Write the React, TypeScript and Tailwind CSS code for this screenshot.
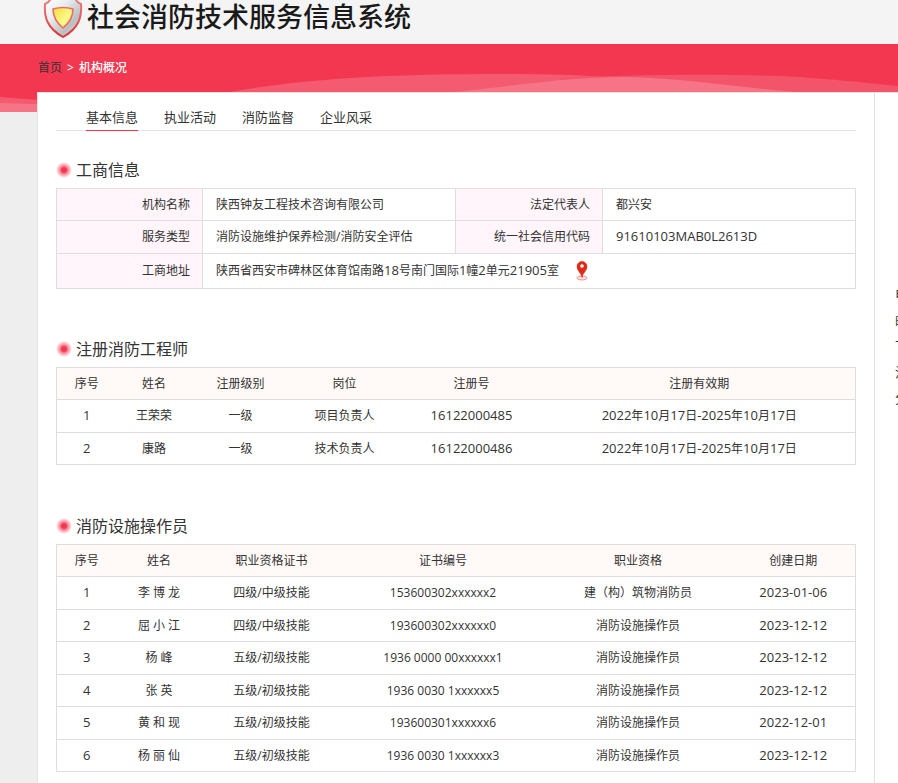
const CJK = "font-['Open_Sans','Noto_Sans_CJK_SC',sans-serif]"

const tabs = ['基本信息', '执业活动', '消防监督', '企业风采']

const engineers = [
  ['1', '王荣荣', '一级', '项目负责人', '16122000485', '2022年10月17日-2025年10月17日'],
  ['2', '康路', '一级', '技术负责人', '16122000486', '2022年10月17日-2025年10月17日'],
]

const operators = [
  ['1', '李 博 龙', '四级/中级技能', '153600302xxxxxx2', '建（构）筑物消防员', '2023-01-06'],
  ['2', '屈 小 江', '四级/中级技能', '193600302xxxxxx0', '消防设施操作员', '2023-12-12'],
  ['3', '杨 峰', '五级/初级技能', '1936 0000 00xxxxxx1', '消防设施操作员', '2023-12-12'],
  ['4', '张 英', '五级/初级技能', '1936 0030 1xxxxxx5', '消防设施操作员', '2023-12-12'],
  ['5', '黄 和 现', '五级/初级技能', '193600301xxxxxx6', '消防设施操作员', '2022-12-01'],
  ['6', '杨 丽 仙', '五级/初级技能', '1936 0030 1xxxxxx3', '消防设施操作员', '2023-12-12'],
]

function Shield() {
  return (
    <svg viewBox="0 0 40 40" className="h-10 w-10 shrink-0" aria-hidden="true">
      <defs>
        <linearGradient id="steel" x1="0" y1="0" x2="1" y2="1">
          <stop offset="0" stopColor="#ffffff" />
          <stop offset="0.35" stopColor="#e9eef0" />
          <stop offset="0.7" stopColor="#b9bec1" />
          <stop offset="1" stopColor="#f3f3f3" />
        </linearGradient>
        <linearGradient id="edge" x1="0" y1="0" x2="0" y2="1">
          <stop offset="0" stopColor="#f07f80" />
          <stop offset="1" stopColor="#dd3436" />
        </linearGradient>
        <linearGradient id="gold" x1="0" y1="0" x2="1" y2="1">
          <stop offset="0" stopColor="#f5dc3c" />
          <stop offset="0.6" stopColor="#fdf98c" />
          <stop offset="1" stopColor="#f3e04a" />
        </linearGradient>
      </defs>
      <path d="M8 -2 C7 1 5 3 2 4 C1 17 4 28 20 37 C36 28 39 17 38 4 C35 3 33 1 32 -2 Z" fill="url(#steel)" stroke="url(#edge)" strokeWidth="2" />
      <path d="M10 9 Q20 6 30 9 Q30 20 20 28 Q10 20 10 9 Z" fill="url(#gold)" stroke="#ee6a62" strokeWidth="1.6" />
    </svg>
  )
}

function Waves() {
  return (
    <svg viewBox="0 0 898 68" preserveAspectRatio="none" className="absolute inset-0 h-full w-full" aria-hidden="true">
      <path d="M230 48 C330 30 440 30 520 30 C600 31 640 34 700 48 Z" fill="#f45b70" />
      <path d="M560 34 C650 30 740 30 800 33 C840 36 870 39 898 42 V50 H560 Z" fill="#f4546a" />
      <path d="M455 48 C530 40 570 33 625 33 C680 34 730 42 795 48 Z" fill="#f67486" />
      <path d="M0 53 Q20 55 60 57 V68 H0 Z" fill="#f45b70" />
      <path d="M0 59 L60 61 V68 H0 Z" fill="#f67486" />
    </svg>
  )
}

function Pin() {
  return (
    <svg viewBox="0 0 14 20" className="h-5 w-3.5" aria-hidden="true">
      <ellipse cx="7" cy="17" rx="5.2" ry="2" fill="#fbe3df" stroke="#f0958a" />
      <path d="M7 16.500 C6.500 12 2 10 2 5.500 A5 5 0 0 1 12 5.500 C12 10 7.500 12 7 16.500 Z" fill="#dc2a17" stroke="#dc2a17" strokeWidth="0.6" />
      <circle cx="7" cy="5" r="1.800" fill="#fff" />
    </svg>
  )
}

// Latin runs are set one size larger than the Chinese around them
function Mixed({ text }: { text: string }) {
  return text.split(/([\dA-Z\-]+)/).map((part, i) =>
    i % 2 ? <span key={i} className="text-[13px] leading-3">{part}</span> : part
  )
}

function SectionTitle({ children }: { children: string }) {
  return (
    <h2 className="flex h-9 items-center gap-1 text-base text-[#333]">
      <span className="h-4 w-4 rounded-full bg-[radial-gradient(circle,#f23751_0_20%,#f78b9a_36%,#fbc3cb_54%,#fff_72%)]" />
      {children}
    </h2>
  )
}

function DataTable({ heads, widths, rows }: { heads: string[]; widths: string[]; rows: string[][] }) {
  return (
    <table className="w-full table-fixed border-collapse border border-[#dedede] text-center">
      <thead>
        <tr className="h-8 border-b border-[#dedede] bg-[#fff9f7]">
          {heads.map((head, i) => (
            <th key={head} className={`font-normal ${widths[i]}`}>{head}</th>
          ))}
        </tr>
      </thead>
      <tbody>
        {rows.map(row => (
          <tr key={row[0]} className="border-b border-[#dedede] odd:h-[33px] even:h-8">
            {row.map((cell, i) => (
              <td key={i} className="whitespace-nowrap">
                {cell.includes('x') ? cell : <Mixed text={cell} />}
              </td>
            ))}
          </tr>
        ))}
      </tbody>
    </table>
  )
}

const labelCell = 'border border-[#dedede] bg-[#fff5fb] pr-3 text-right font-normal'
const valueCell = 'border border-[#dedede] pl-[13px]'

export default function App() {
  return (
    <div className={`min-h-screen overflow-hidden bg-[#eee] text-xs leading-4 text-[#333] ${CJK}`}>
      <header className="flex h-11 items-start gap-1 bg-[#f4f4f4] pl-[43px]">
        <Shield />
        <h1 className="text-[27px] leading-[34px] font-medium whitespace-nowrap text-[#1a1a1a]">社会消防技术服务信息系统</h1>
      </header>

      <div className="relative h-[68px] bg-[#f33750]">
        <Waves />
        <nav className="relative flex gap-[5px] pt-4 pl-[38px] text-white">
          <a href="#" className="text-[#333]">首页</a>
          <span>&gt;</span>
          <span className="font-medium">机构概况</span>
        </nav>
      </div>

      <div className="relative -mt-5 ml-[37px] flex border-t border-l border-[#e3e3e3] bg-white">
        <main className="min-w-0 flex-1 px-[18px] pb-3">
          <nav className="flex gap-[26px] border-b border-[#e3e3e3] pl-[30px] text-[13px]">
            {tabs.map((tab, i) => (
              <a
                key={tab}
                href="#"
                className={`-mb-px flex h-[38px] items-end border-b pb-[5px] leading-4 ${i === 0 ? 'border-[#f33750]' : 'border-transparent'}`}
              >
                {tab}
              </a>
            ))}
          </nav>

          <section className="mt-[21px]">
            <SectionTitle>工商信息</SectionTitle>
            <table className="w-full table-fixed border-collapse">
              <tbody>
                <tr className="h-8">
                  <th className={`w-[146px] ${labelCell}`}>机构名称</th>
                  <td className={valueCell}>陕西钟友工程技术咨询有限公司</td>
                  <th className={`w-[147px] ${labelCell}`}>法定代表人</th>
                  <td className={valueCell}>都兴安</td>
                </tr>
                <tr className="h-[33px]">
                  <th className={labelCell}>服务类型</th>
                  <td className={valueCell}>消防设施维护保养检测/消防安全评估</td>
                  <th className={labelCell}>统一社会信用代码</th>
                  <td className={valueCell}><Mixed text="91610103MAB0L2613D" /></td>
                </tr>
                <tr className="h-[35px]">
                  <th className={labelCell}>工商地址</th>
                  <td className={valueCell} colSpan={3}>
                    <div className="flex items-center gap-4">
                      <span><Mixed text="陕西省西安市碑林区体育馆南路18号南门国际1幢2单元21905室" /></span>
                      <Pin />
                    </div>
                  </td>
                </tr>
              </tbody>
            </table>
          </section>

          <section className="mt-[42px]">
            <SectionTitle>注册消防工程师</SectionTitle>
            <DataTable
              heads={['序号', '姓名', '注册级别', '岗位', '注册号', '注册有效期']}
              widths={['w-[60px]', 'w-[75px]', 'w-[98px]', 'w-[110px]', 'w-36', '']}
              rows={engineers}
            />
          </section>

          <section className="mt-[43px]">
            <SectionTitle>消防设施操作员</SectionTitle>
            <DataTable
              heads={['序号', '姓名', '职业资格证书', '证书编号', '职业资格', '创建日期']}
              widths={['w-[60px]', 'w-[85px]', 'w-[140px]', '', 'w-[187px]', 'w-[124px]']}
              rows={operators}
            />
          </section>
        </main>

        <aside className="w-6 shrink-0 overflow-hidden border-l border-[#e3e3e3] pt-[188px] pl-5 text-[13px] leading-[26px] whitespace-nowrap">
          <p>电</p>
          <p>邮</p>
          <p>丁</p>
          <p>法</p>
          <p>分</p>
        </aside>
      </div>
    </div>
  )
}
